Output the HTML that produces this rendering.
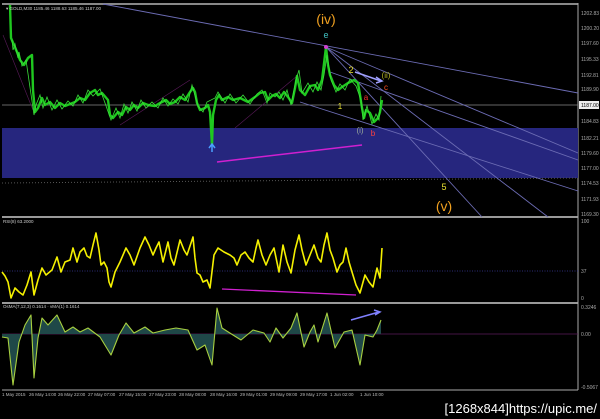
<!DOCTYPE html>
<html><head><meta charset="utf-8"><style>
html,body{margin:0;padding:0;background:#000;width:600px;height:419px;overflow:hidden}
svg{display:block}
text{font-family:"Liberation Sans",sans-serif}
.ax{fill:#aaa;font-size:5px}
</style></head><body>
<svg width="600" height="419" viewBox="0 0 600 419">
<rect width="600" height="419" fill="#000"/>
<rect x="2" y="3" width="576" height="2" fill="#888"/>
<rect x="2" y="216" width="576" height="2" fill="#999"/>
<rect x="2" y="302" width="576" height="2" fill="#999"/>
<line x1="578" y1="3" x2="578" y2="390" stroke="#aaa" stroke-width="1"/>
<line x1="2" y1="390" x2="578" y2="390" stroke="#aaa" stroke-width="1"/>
<rect x="2" y="128" width="576" height="50" fill="#26267e"/>
<line x1="2" y1="183" x2="578" y2="178" stroke="#555" stroke-dasharray="1,2"/>
<line x1="2" y1="105" x2="578" y2="105" stroke="#888" stroke-width="0.8"/>
<g stroke="#6c6cb4" stroke-width="0.9" fill="none">
<line x1="103" y1="4" x2="578" y2="93"/>
<line x1="326" y1="47" x2="578" y2="153"/>
<line x1="326" y1="47" x2="482" y2="217"/>
<line x1="326" y1="47" x2="548" y2="217"/>
<line x1="300" y1="102" x2="578" y2="191"/>
<line x1="330" y1="72" x2="578" y2="160"/>
</g>
<g stroke="#5a1a5a" stroke-width="0.6" fill="none">
<line x1="3" y1="35" x2="33" y2="110"/>
<line x1="120" y1="125" x2="190" y2="80"/>
<line x1="235" y1="128" x2="297" y2="76"/>
</g>
<polyline fill="none" stroke="#1fc81f" stroke-width="2.4" stroke-linejoin="round" points="10,5 11,38 14,45 17,52 20,60 24,65 28,58 32,55 33,90 35,112 38,108 42,98 45,105 50,102 55,108 60,103 65,106 70,104 75,102 80,98 85,100 90,93 95,90 98,95 102,93 108,100 110,115 113,118 118,112 122,115 126,107 130,110 134,105 138,108 143,103 148,105 155,106 160,103 166,100 170,104 175,102 180,97 185,100 190,92 193,88 195,92 197,103 200,110 205,108 208,105 210,112 212,145 213,115 216,100 219,95 222,100 228,97 233,100 240,98 248,102 255,97 260,93 265,92 268,100 272,96 276,94 280,98 284,92 288,97 292,103 295,88 297,76 300,90 305,95 310,86 315,85 318,90 322,80 326,47 328,65 330,75 334,85 338,90 342,87 348,83 354,80 358,83 360,95 362,108 364,118 366,110 370,113 374,122 378,118 380,112 382,100"/>
<polyline fill="none" stroke="#3ae03a" stroke-width="0.8" points="12,40 13,50 15,44 18,58 19,52 22,66 26,60 34,115 36,105 40,95 43,108 47,97 52,110 57,100 62,109 68,101 73,106 78,95 83,103 88,90 93,96 100,89 105,103 111,120 116,108 120,118 124,104 128,113 132,102 137,111 141,100 146,108 152,102 158,108 163,98 168,106 173,99 178,104 183,94 188,102 192,85 198,106 203,112 207,102 215,98 218,92 225,103 230,94 236,103 243,95 250,104 257,94 262,90 267,103 270,93 275,97 279,92 283,100 287,90 291,105 296,80 299,70 302,93 308,83 313,92 317,82 321,90 324,75 327,55 331,80 336,92 340,84 345,90 350,79 356,86 361,100 363,120 367,106 372,124 376,114 379,120 381,96"/>
<line x1="217" y1="162" x2="362" y2="145" stroke="#d020d0" stroke-width="1.5"/>
<path d="M212 152 L212 145 M209 148 L212 144 L215 148" stroke="#4aa0ff" stroke-width="1.5" fill="none"/>
<circle cx="326" cy="47" r="2" fill="#d040d0"/>
<path d="M355 72 L381 81 M376 77 L382 81 L376 83" stroke="#a0a0ff" stroke-width="1.5" fill="none"/>
<text x="326" y="24" fill="#f0a020" font-size="14" text-anchor="middle">(iv)</text>
<text x="326" y="38" fill="#40c0c0" font-size="9" text-anchor="middle">e</text>
<text x="351" y="73" fill="#e8e030" font-size="9" text-anchor="middle">2</text>
<text x="386" y="78" fill="#b0b020" font-size="8" text-anchor="middle">(ii)</text>
<text x="386" y="90" fill="#ff5020" font-size="8" text-anchor="middle">c</text>
<text x="366" y="100" fill="#ff3030" font-size="8" text-anchor="middle">a</text>
<text x="340" y="109" fill="#e8e030" font-size="8" text-anchor="middle">1</text>
<text x="360" y="133" fill="#9aaa9a" font-size="8" text-anchor="middle">(i)</text>
<text x="373" y="136" fill="#ff4040" font-size="8" text-anchor="middle">b</text>
<text x="444" y="190" fill="#e8e030" font-size="9" text-anchor="middle">5</text>
<text x="444" y="211" fill="#f0a020" font-size="14" text-anchor="middle">(v)</text>
<text x="6" y="10" fill="#ccc" font-size="4.5">▾ GOLD,M30  1185.46  1188.63  1185.46  1187.00</text>
<g class="ax">
<text x="581" y="15">1202.83</text><text x="581" y="30">1200.20</text><text x="581" y="45">1197.60</text>
<text x="581" y="61">1195.33</text><text x="581" y="77">1192.81</text><text x="581" y="91">1189.90</text>
<text x="581" y="123">1184.83</text><text x="581" y="140">1182.21</text><text x="581" y="155">1179.60</text>
<text x="581" y="170">1177.00</text><text x="581" y="185">1174.53</text><text x="581" y="201">1171.93</text>
<text x="581" y="216">1169.30</text>
<text x="581" y="223">100</text><text x="581" y="273">37</text><text x="581" y="300">0</text>
<text x="581" y="309">0.3246</text><text x="581" y="336">0.00</text><text x="581" y="389">-0.5067</text>
</g>
<rect x="579" y="101" width="20" height="8" fill="#eee"/>
<text x="581" y="107" font-size="5" fill="#000">1187.00</text>
<text x="3" y="223" fill="#ccc" font-size="4.5">RSI(8) 63.2000</text>
<line x1="2" y1="271" x2="578" y2="271" stroke="#3a3a9a" stroke-dasharray="1,1.5" stroke-width="0.8"/>
<polyline fill="none" stroke="#f4f000" stroke-width="1.6" stroke-linejoin="round" points="2,272 5,276 8,282 11,298 15,288 19,292 23,295 27,285 31,272 34,295 38,280 42,268 46,275 52,270 57,257 61,272 65,262 70,260 73,248 77,262 80,252 84,248 87,256 90,258 93,245 96,233 99,250 101,265 104,262 107,268 109,282 111,287 115,272 120,262 126,248 130,255 134,265 140,248 145,237 149,245 153,255 156,248 159,242 163,262 168,242 171,258 174,265 180,240 184,250 187,255 193,237 195,258 197,273 200,275 203,282 207,280 210,288 214,255 218,248 224,252 230,255 234,258 237,265 241,255 245,252 249,258 253,262 256,248 258,240 262,255 266,265 270,255 274,248 279,272 283,245 287,262 291,273 295,250 299,235 302,250 306,265 310,255 314,245 318,258 321,262 324,245 327,233 330,250 333,258 337,272 340,265 343,262 346,248 349,262 352,272 356,285 360,293 365,275 369,282 373,287 377,268 380,278 382,248"/>
<line x1="222" y1="289" x2="356" y2="295" stroke="#d020d0" stroke-width="1.3"/>
<text x="3" y="308" fill="#ccc" font-size="4.5">OsMA(7,12,3) 0.1614  ·  vMA(1) 0.1614</text>
<line x1="2" y1="334" x2="578" y2="334" stroke="#5a1a5a" stroke-width="0.8"/>
<polygon fill="#1f4848" points="2,334 2,337 8,338 13,385 19,342 25,325 31,315 34,378 38,338 42,318 48,325 57,315 65,332 73,327 80,332 88,328 100,337 111,355 119,335 126,323 134,333 145,327 153,333 165,330 176,328 188,330 197,350 205,345 212,365 217,308 222,328 233,335 241,340 253,330 264,333 270,342 276,328 283,338 291,328 297,313 304,347 310,332 314,325 318,342 327,313 335,348 344,332 352,330 360,365 365,335 373,337 377,330 381,320 381,334"/>
<polyline fill="none" stroke="#a8d040" stroke-width="1.1" stroke-linejoin="round" points="2,337 8,338 13,385 19,342 25,325 31,315 34,378 38,338 42,318 48,325 57,315 65,332 73,327 80,332 88,328 100,337 111,355 119,335 126,323 134,333 145,327 153,333 165,330 176,328 188,330 197,350 205,345 212,365 217,308 222,328 233,335 241,340 253,330 264,333 270,342 276,328 283,338 291,328 297,313 304,347 310,332 314,325 318,342 327,313 335,348 344,332 352,330 360,365 365,335 373,337 377,330 381,320"/>
<path d="M351 320 L379 312 M374 310 L380 312 L375 315" stroke="#8080ff" stroke-width="1.5" fill="none"/>
<g fill="#bbb" font-size="4.5">
<text x="2" y="396">1 May 2015</text><text x="29" y="396">26 May 14:00</text><text x="58" y="396">26 May 22:00</text>
<text x="88" y="396">27 May 07:00</text><text x="119" y="396">27 May 15:00</text><text x="149" y="396">27 May 23:00</text>
<text x="179" y="396">28 May 08:00</text><text x="210" y="396">28 May 16:00</text><text x="240" y="396">29 May 01:00</text>
<text x="270" y="396">29 May 09:00</text><text x="300" y="396">29 May 17:00</text><text x="330" y="396">1 Jun 02:00</text>
<text x="360" y="396">1 Jun 10:00</text>
</g>
<text x="597" y="413" fill="#fff" font-size="13" text-anchor="end" font-family="Liberation Mono, monospace">[1268x844]https://upic.me/</text>
</svg>
</body></html>
